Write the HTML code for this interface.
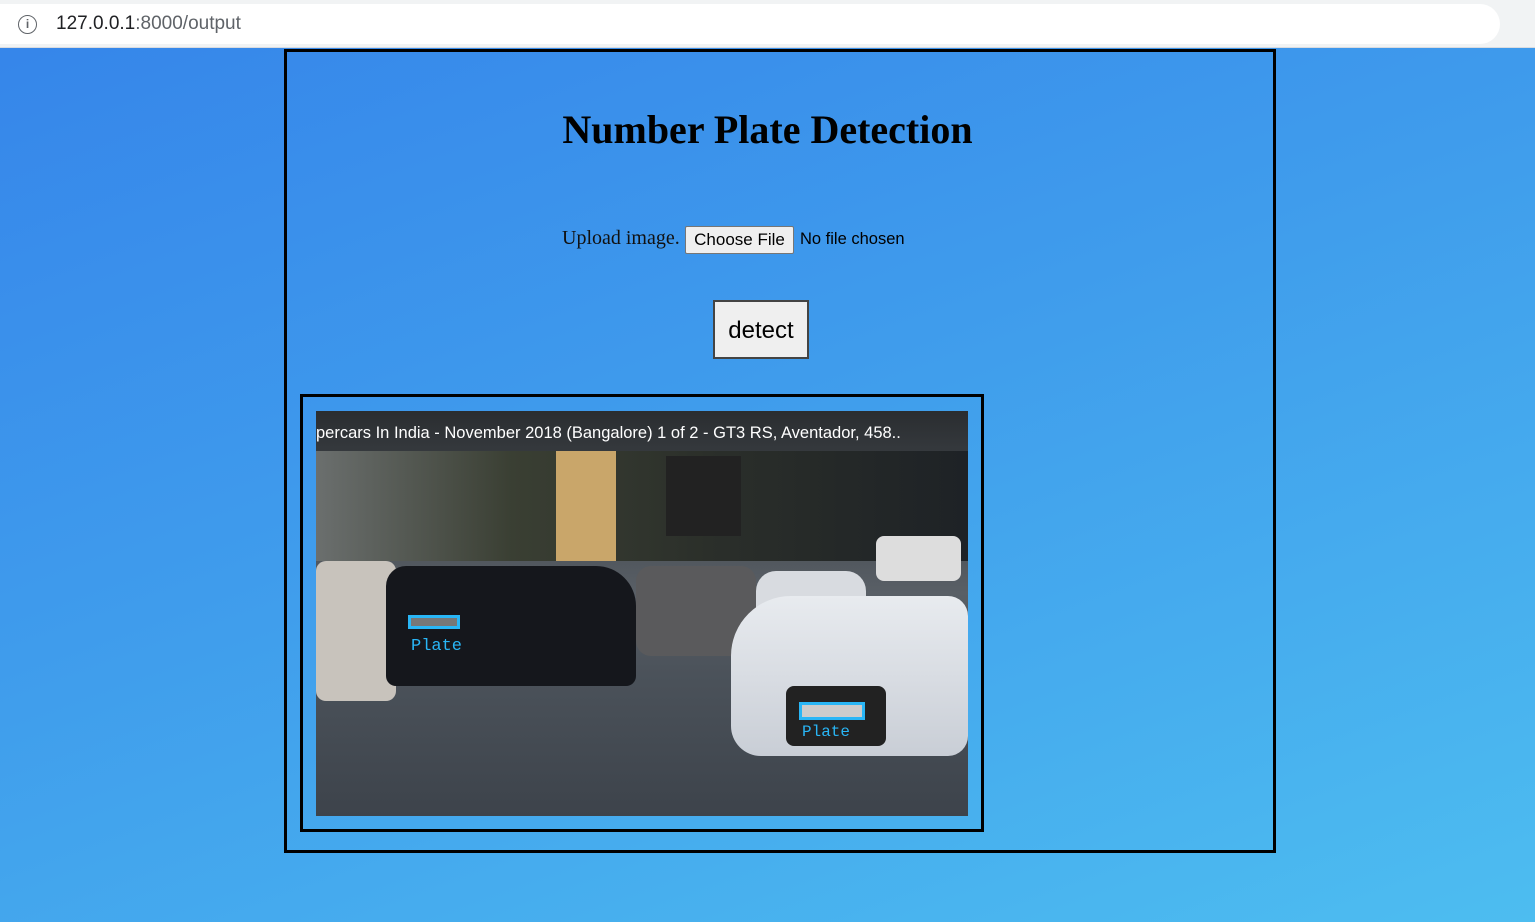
<!DOCTYPE html>
<html><head><meta charset="utf-8"><style>
*{margin:0;padding:0;box-sizing:border-box}
body{width:1535px;height:922px;overflow:hidden;position:relative;background:linear-gradient(160deg,#3584ea 0%,#3f9cec 45%,#4dbdf0 100%);font-family:"Liberation Serif",serif}
.bar{position:absolute;left:0;top:0;width:1535px;height:48px;background:#f1f3f4;border-bottom:1px solid #dadce0}
.field{position:absolute;left:0;top:4px;width:1500px;height:40px;background:#fff;border-radius:0 20px 20px 0}
.url{position:absolute;left:56px;top:13px;font:19px "Liberation Sans",sans-serif;color:#202124}
.url span{color:#5f6368}
.info{position:absolute;left:18px;top:15px;width:19px;height:19px;border:1.5px solid #5f6368;border-radius:50%;font:bold 12px "Liberation Sans",sans-serif;color:#5f6368;text-align:center;line-height:16px}
.outer{position:absolute;left:284px;top:49px;width:992px;height:804px;border:3px solid #000}
h1{position:absolute;left:0;width:100%;top:106px;text-align:center;font-size:40px;font-weight:bold;color:#000}
.up{position:absolute;left:562px;top:227px;font-size:20px;color:#111}
.btn{position:absolute;left:685px;top:226px;width:109px;height:28px;background:#efefef;border:1px solid #767676;border-radius:2px;font:17px "Liberation Sans",sans-serif;text-align:center;line-height:26px;color:#000}
.nf{position:absolute;left:800px;top:230px;font:16.5px "Liberation Sans",sans-serif;color:#000}
.det{position:absolute;left:713px;top:300px;width:96px;height:59px;background:#efefef;border:2px solid #444;font:24px "Liberation Sans",sans-serif;text-align:center;line-height:57px}
.inner{position:absolute;left:300px;top:394px;width:684px;height:438px;border:3px solid #000}
.img{position:absolute;left:316px;top:411px;width:652px;height:405px;overflow:hidden;background:linear-gradient(180deg,#2a2d30 0%,#4b5157 30%,#595f66 45%,#4b525a 65%,#3d434b 100%)}
</style></head><body>
<div class="bar"><div class="field"></div><div class="info">i</div><div class="url">127.0.0.1<span>:8000/output</span></div></div>
<div class="outer"></div>
<h1>Number Plate Detection</h1>
<div class="up">Upload image.</div><div class="btn">Choose File</div><div class="nf">No file chosen</div>
<div class="det">detect</div>
<div class="inner"></div>
<div class="img">
<div style="position:absolute;left:0;top:40px;width:652px;height:110px;background:linear-gradient(90deg,#6b6f6e,#3a3f33 30%,#2b2f2a 60%,#1e2226)"></div>
<div style="position:absolute;left:240px;top:40px;width:60px;height:110px;background:#c9a66a"></div>
<div style="position:absolute;left:350px;top:45px;width:75px;height:80px;background:#222"></div>
<div style="position:absolute;left:560px;top:125px;width:85px;height:45px;background:#ddd;border-radius:8px"></div>
<div style="position:absolute;left:0;top:150px;width:80px;height:140px;background:#c8c3bc;border-radius:10px"></div>
<div style="position:absolute;left:70px;top:155px;width:250px;height:120px;background:#15171c;border-radius:20px 40px 10px 10px"></div>
<div style="position:absolute;left:320px;top:155px;width:120px;height:90px;background:#5a5a5c;border-radius:15px"></div>
<div style="position:absolute;left:440px;top:160px;width:110px;height:70px;background:#d8dbe0;border-radius:20px"></div>
<div style="position:absolute;left:415px;top:185px;width:237px;height:160px;background:linear-gradient(180deg,#e8ebef,#c9ced6);border-radius:60px 20px 20px 30px"></div>
<div style="position:absolute;left:470px;top:275px;width:100px;height:60px;background:#222;border-radius:8px"></div>
<div style="position:absolute;left:92px;top:204px;width:52px;height:14px;border:3px solid #29b6f6;background:#777"></div>
<div style="position:absolute;left:95px;top:226px;font:17px 'Liberation Mono',monospace;color:#29b6f6">Plate</div>
<div style="position:absolute;left:483px;top:291px;width:66px;height:18px;border:3px solid #29b6f6;background:#ccc"></div>
<div style="position:absolute;left:486px;top:312px;font:16px 'Liberation Mono',monospace;color:#29b6f6">Plate</div>
<div style="position:absolute;left:0;top:13px;font:16.5px 'Liberation Sans',sans-serif;color:#fff;white-space:nowrap">percars In India - November 2018 (Bangalore) 1 of 2 - GT3 RS, Aventador, 458..</div>
</div>
</body></html>
